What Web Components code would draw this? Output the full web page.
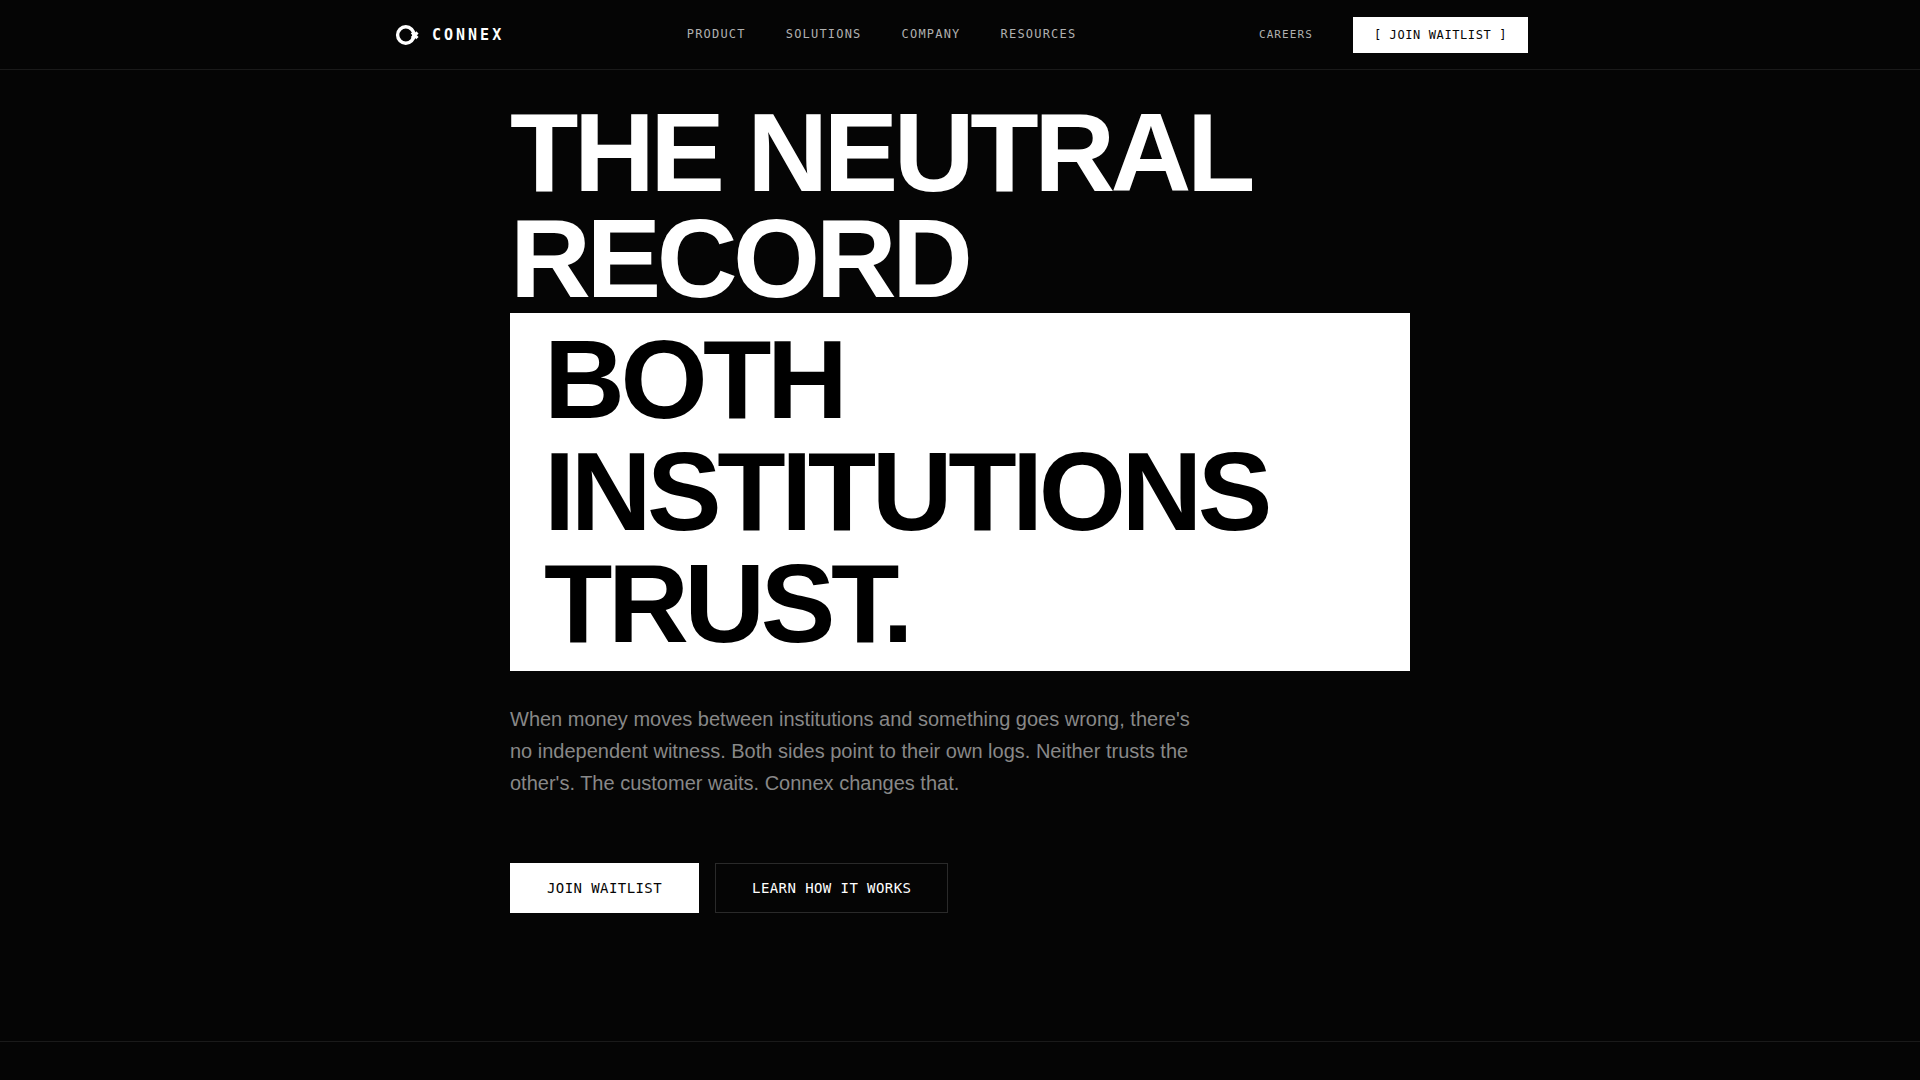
<!DOCTYPE html>
<html lang="en">
<head>
<meta charset="utf-8">
<meta name="viewport" content="width=device-width, initial-scale=1">
<title>Connex</title>
<style>
  :root {
    --bg: #050505;
    --line: #1a1a1a;
    --mono: "DejaVu Sans Mono", monospace;
    --sans: "Liberation Sans", Arial, sans-serif;
  }
  body { margin: 0; background: var(--bg); color: #fff; font-family: var(--sans); overflow-x: hidden; }
</style>
</head>
<body>
<connex-page></connex-page>

<script>
const define = (name, html) => {
  const template = document.createElement('template');
  template.innerHTML = html;
  customElements.define(name, class extends HTMLElement {
    constructor() {
      super();
      this.attachShadow({ mode: 'open' }).append(template.content.cloneNode(true));
    }
  });
};

define('connex-logo', `
<style>
  :host { display: block; }
  a { display: flex; align-items: center; gap: 8px; color: #fff; text-decoration: none;
      font: 700 15px/24px var(--mono); letter-spacing: 0.2em; }
  svg { display: block; width: 32px; height: 32px; }
</style>
<a href="#">
  <svg viewBox="0 0 32 32" fill="none" stroke="#fff" aria-hidden="true">
    <circle cx="13.8" cy="16" r="8.2" stroke-width="3.4"/>
    <path d="M20 13.4L25.4 19.2M20 19.2L25.4 13.4" stroke-width="3.2"/>
  </svg>
  <span>CONNEX</span>
</a>`);

define('connex-link', `
<style>
  :host { display: block; font: 12px/18px var(--mono); letter-spacing: 0.1em; color: #b0b0b0; }
  :host([small]) { font-size: 11px; }
  a { display: block; color: inherit; text-decoration: none; }
</style>
<a href="#"><slot></slot></a>`);

define('connex-button', `
<style>
  :host { display: block; }
  button { display: block; margin: 0; border: 1px solid #fff; border-radius: 0; background: #fff; color: #050505;
           padding: 16px 36px; font: 14px/16px var(--mono); letter-spacing: 0.03em; white-space: nowrap; cursor: pointer; }
  :host([compact]) button { padding: 10px 20px; font-size: 12px; line-height: 14px; letter-spacing: 0.05em; }
  :host([outline]) button { background: transparent; border-color: #2a2a2a; color: #fff; }
</style>
<button type="button"><slot></slot></button>`);

define('connex-header', `
<style>
  :host { display: block; border-bottom: 1px solid var(--line); }
  header { box-sizing: border-box; max-width: 1200px; min-height: 69px; margin: 0 auto; padding: 0 32px;
           display: flex; align-items: center; justify-content: space-between; }
  nav, div { display: flex; align-items: center; gap: 40px; }
  nav { padding-bottom: 2px; }
</style>
<header>
  <connex-logo></connex-logo>
  <nav>
    <connex-link>PRODUCT</connex-link>
    <connex-link>SOLUTIONS</connex-link>
    <connex-link>COMPANY</connex-link>
    <connex-link>RESOURCES</connex-link>
  </nav>
  <div>
    <connex-link small>CAREERS</connex-link>
    <connex-button compact>[ JOIN WAITLIST ]</connex-button>
  </div>
</header>`);

define('connex-hero', `
<style>
  :host { display: block; padding: 30px 32px 128px; border-bottom: 1px solid var(--line); }
  section { max-width: 900px; margin: 0 auto; }
  h1 { margin: 0 0 32px; font-size: 112px; line-height: 106px; font-weight: 700; letter-spacing: -0.04em; }
  h1 span { display: block; margin-top: 1px; padding: 11px 34px; background: #fff; color: #000; line-height: 112px; }
  p { margin: 0 0 64px; max-width: 700px; font-size: 20px; line-height: 32px; color: #888; }
  div { display: flex; flex-wrap: wrap; gap: 16px; }
</style>
<section>
  <h1>THE NEUTRAL RECORD <span>BOTH INSTITUTIONS TRUST.</span></h1>
  <p>When money moves between institutions and something goes wrong, there's no independent witness. Both sides point to their own logs. Neither trusts the other's. The customer waits. Connex changes that.</p>
  <div>
    <connex-button>JOIN WAITLIST</connex-button>
    <connex-button outline>LEARN HOW IT WORKS</connex-button>
  </div>
</section>`);

define('connex-page', `
<style>
  :host { display: block; min-height: 100vh; background: var(--bg); }
</style>
<connex-header></connex-header>
<main><connex-hero></connex-hero></main>`);
</script>
</body>
</html>
